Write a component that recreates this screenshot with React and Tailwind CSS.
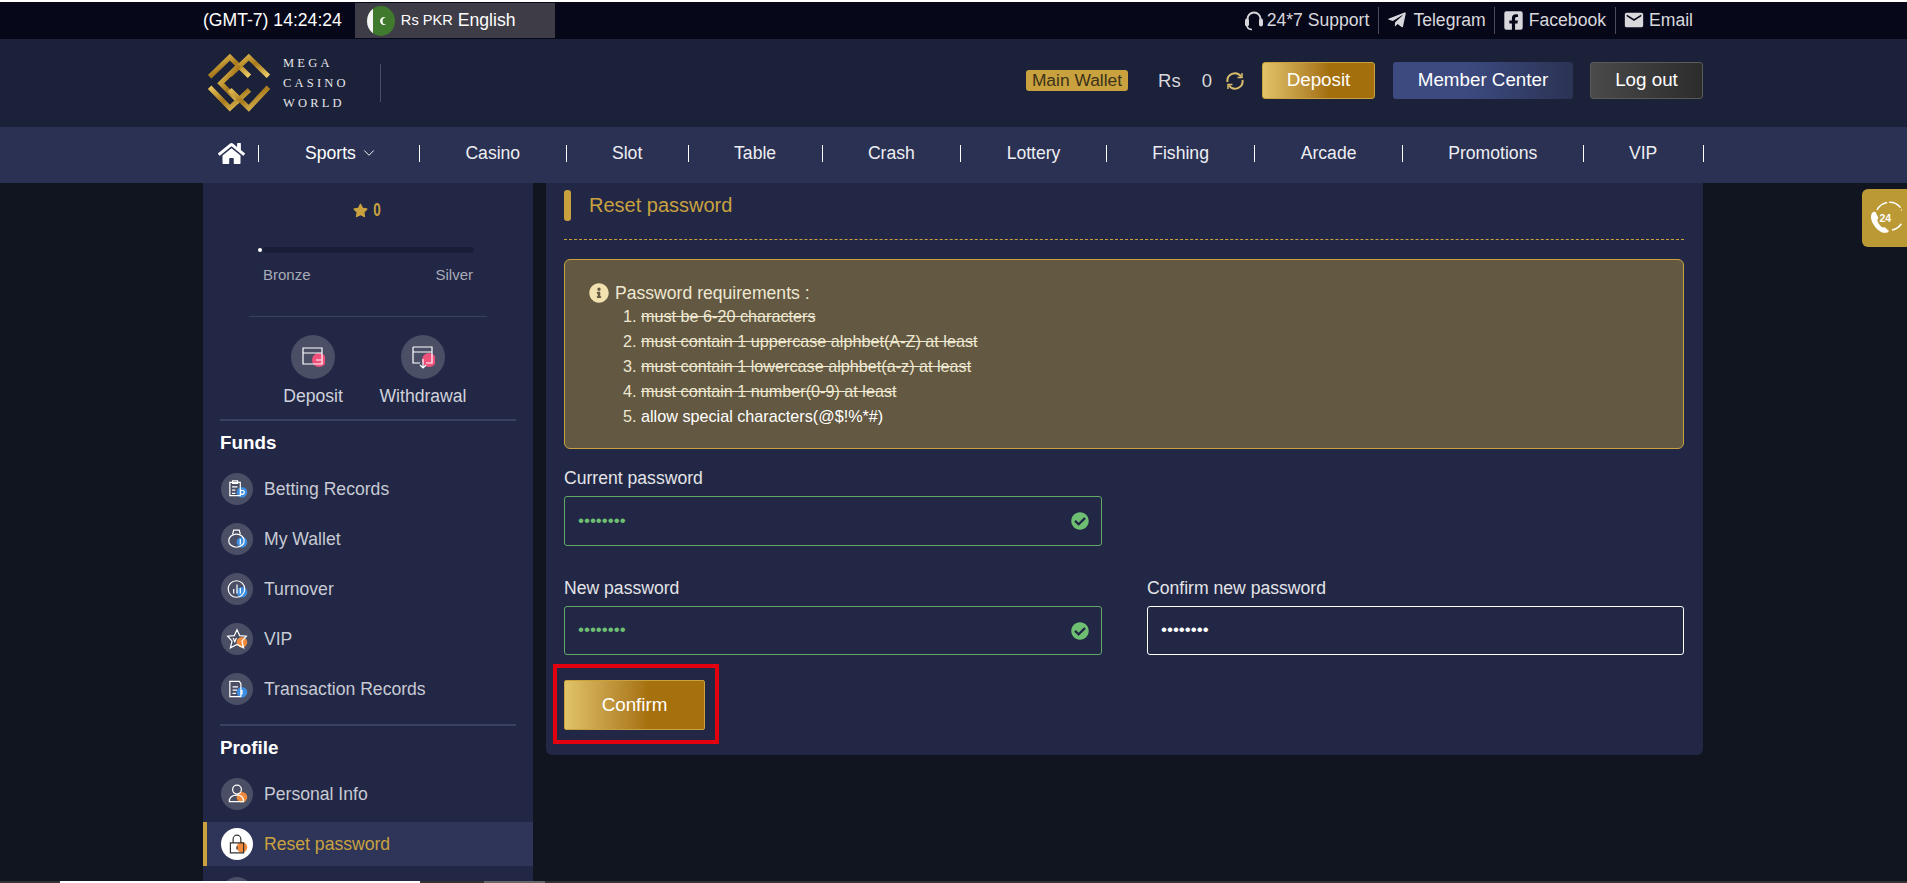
import React from 'react';
import { FaHome, FaTelegramPlane, FaFacebookSquare, FaStar, FaInfoCircle, FaCheckCircle } from 'react-icons/fa';
import { MdEmail } from 'react-icons/md';
import { ChevronDown } from 'lucide-react';

const navItems = ['Casino', 'Slot', 'Table', 'Crash', 'Lottery', 'Fishing', 'Arcade', 'Promotions', 'VIP'];

const Logo = () => (
    <svg width="64" height="60" viewBox="20 8 196 182" fill="none">
        <defs>
            <linearGradient id="gold" x1="0" y1="0" x2="1" y2="1">
                <stop offset="0" stopColor="#e9c65a" />
                <stop offset="0.5" stopColor="#a87a1c" />
                <stop offset="1" stopColor="#efd06a" />
            </linearGradient>
        </defs>
        <g stroke="url(#gold)" strokeWidth="15">
            <path d="M28 80L90 20L150 78" />
            <path d="M90 75L148 20L208 78" />
            <path d="M118 45L62 100L120 158" />
            <path d="M28 112L90 176L150 120" />
            <path d="M90 120L148 176L208 112" />
        </g>
    </svg>
);

const Flag = () => (
    <svg width="28" height="30" viewBox="0 0 28 30">
        <ellipse cx="14" cy="15" rx="14" ry="15" fill="#3f7a2e" />
        <path d="M6 2.700A14 15 0 0 0 6 27.300Z" fill="#f4f4f4" />
        <path d="M19 11.500A4 4 0 1 0 19 18.500A3.200 3.200 0 1 1 19 11.500Z" fill="#fff" />
    </svg>
);

const Headset = () => (
    <svg width="20" height="21" viewBox="0 0 20 21" fill="none" stroke="#d8d8dc">
        <path d="M3.500 11V9A6.500 6.500 0 0 1 16.500 9V11" strokeWidth="2" />
        <rect x="1" y="8.500" width="4" height="8" rx="2" fill="#d8d8dc" stroke="none" />
        <rect x="15" y="8.500" width="4" height="8" rx="2" fill="#d8d8dc" stroke="none" />
        <path d="M3 16C3.500 18.500 5 19.500 8 19.500" strokeWidth="1.500" />
    </svg>
);

const Refresh = () => (
    <svg width="20" height="20" viewBox="0 0 20 20" fill="none" stroke="#d9bd6c" strokeWidth="2">
        <path d="M2.500 11A7.500 7.500 0 0 1 16 5.500" />
        <path d="M17.500 9A7.500 7.500 0 0 1 4 14.500" />
        <path d="M17 2V6.500H12.500" strokeWidth="1.500" />
        <path d="M3 18V13.500H7.500" strokeWidth="1.500" />
    </svg>
);

const Phone24 = () => (
    <svg width="34" height="34" viewBox="0 0 34 34" fill="none">
        <path d="M9 9A14 14 0 1 1 24 29" stroke="#fff" strokeWidth="1.500" strokeDasharray="13 2" />
        <path d="M4 12C1 17 5 26 13 31C16 32.500 20 32 21 30L16.500 26C15 27 13 26 11 23C9 20 9 18 10.500 17L7.500 11C6 10.500 5 11 4 12Z" fill="#fff" />
        <text x="11.500" y="21" fontSize="10.500" fontWeight="700" fill="#fff" fontFamily="Liberation Sans">24</text>
    </svg>
);

// round grey icon on the left of the sidebar rows
const RowIcon = ({ accent, active, children }) => (
    <span className={`relative flex h-8 w-8 shrink-0 items-center justify-center rounded-full ${active ? 'bg-white' : 'bg-[#4b4f65]'}`}>
        <svg width="22" height="22" viewBox="0 0 20 20" fill="none" stroke={active ? '#333' : '#fff'} strokeWidth="1.100">
            <circle cx="14.500" cy="13" r="4.800" fill={accent} stroke="none" />
            {children}
        </svg>
    </span>
);

const fundsItems = [
    { label: 'Betting Records', accent: '#3b8ee0', icon: <path d="M3.500 4H13V16H3.500ZM6 2.500H10.500V5H6ZM5.500 8H10.500M5.500 11H8.500M5.500 14H8.500M13 13A1.800 1.800 0 1 1 16.600 13A1.800 1.800 0 0 1 13 13Z" /> },
    { label: 'My Wallet', accent: '#3b8ee0', icon: <path d="M2.500 11.500A7 6 0 0 1 16.500 11.500A7 6 0 0 1 2.500 11.500ZM6 5.500L7 2H12L13 5.500M13 10V15" /> },
    { label: 'Turnover', accent: '#3b8ee0', icon: <path d="M17 10A7.500 7.500 0 1 1 2 10A7.500 7.500 0 0 1 17 10ZM7 14V10M10 14V6M13 14V9" /> },
    { label: 'VIP', accent: '#ef8a3c', icon: <path d="M10 1.500L12.500 7L18.500 7.500L14.500 12L16 18L10 15L4 18L5.500 12L1.500 7.500L7.500 7ZM6.500 9L8 12.500L9.500 9" /> },
    { label: 'Transaction Records', accent: '#3b8ee0', icon: <path d="M3.500 3H12L13.500 5V17H3.500ZM6 8H11M6 11H10M6 14H9M14.500 11V15" /> },
];

const FundsRow = ({ label, accent, icon }) => (
    <div className="flex h-[50px] items-center gap-[11px] pl-[18px]">
        <RowIcon accent={accent}>{icon}</RowIcon>
        <span className="text-[17.6px] text-[#c8cad4]">{label}</span>
    </div>
);

const Requirement = ({ n, done, children }) => (
    <li className="flex h-[25px] items-center">
        <span className="w-[18px]">{n}.</span>
        <span className={done ? 'line-through' : 'text-white'}>{children}</span>
    </li>
);

const PasswordField = ({ label, valid, className, boxHeight = 'h-[50px]' }) => (
    <div className={className}>
        <div className="mb-[6px] h-[24px] text-[17.6px] leading-[24px] text-[#e4e4e8]">{label}</div>
        <div className={`flex items-center rounded-[3px] border px-[13px] ${boxHeight} ${valid ? 'border-[#62a868]' : 'border-white'}`}>
            <span className={`mb-[2px] text-[17px] leading-none ${valid ? 'text-[#6fbf73]' : 'text-white'}`}>••••••••</span>
            {valid && <FaCheckCircle className="ml-auto -mr-[1px] text-[18px] text-[#6fbf73]" />}
        </div>
    </div>
);

export default function App() {
    return (
        <div className="relative h-[883px] overflow-hidden border-t-2 border-white bg-[#101520] font-['Liberation_Sans',sans-serif] text-white">
            <div className="h-[37px] bg-[#07071a]">
                <div className="ml-[203px] flex h-full w-[1500px] items-center text-[17.6px]">
                    <span className="mr-[13px]">(GMT-7) 14:24:24</span>
                    <div className="flex h-[35px] w-[200px] items-center gap-[6px] bg-[#3e3c46] pl-[12px]">
                        <Flag />
                        <span className="text-[14.600px]">Rs PKR</span>
                        <span className="-ml-[1px]">English</span>
                    </div>
                    <div className="ml-auto mr-[10px] flex items-center text-[#d8d8dc]">
                        <Headset />
                        <span className="ml-[3px] border-r border-[#4a4a58] pr-[9px]">24*7 Support</span>
                        <FaTelegramPlane className="ml-[8px] text-[20px]" />
                        <span className="ml-[6px] border-r border-[#4a4a58] pr-[8px]">Telegram</span>
                        <FaFacebookSquare className="ml-[8px] text-[21px]" />
                        <span className="ml-[5px] border-r border-[#4a4a58] pr-[9px]">Facebook</span>
                        <MdEmail className="ml-[7px] text-[22px]" />
                        <span className="ml-[4px]">Email</span>
                    </div>
                </div>
            </div>

            <div className="h-[88px] bg-[#1b2139]">
                <div className="ml-[203px] flex h-full w-[1500px] items-center">
                    <div className="ml-[4px] flex items-center">
                        <Logo />
                        <div className="ml-[12px] w-[72px] font-['Liberation_Serif',serif] text-[12.500px] leading-[20px] tracking-[3.200px] text-[#e6e6ea]">
                            <div>MEGA</div>
                            <div>CASINO</div>
                            <div>WORLD</div>
                        </div>
                        <div className="ml-[25px] h-[38px] w-[1px] bg-[#474d68]" />
                    </div>
                    <div className="ml-auto mb-[5px] flex items-center">
                        <span className="rounded-[3px] bg-[#c9a23f] px-[6px] text-[17.400px] leading-[21px] text-[#3b3218]">Main Wallet</span>
                        <span className="ml-[30px] text-[18.500px] text-[#d8d8dc]">Rs</span>
                        <span className="ml-[21px] text-[18.500px] text-[#d8d8dc]">0</span>
                        <span className="ml-[13px]"><Refresh /></span>
                        <button className="ml-[17px] h-[37px] w-[113px] rounded-[3px] border border-[#c9a23f] bg-gradient-to-r from-[#e2c468] via-[#a36f0c] via-60% to-[#a36f0c] text-[18.800px] text-white">Deposit</button>
                        <button className="ml-[18px] h-[37px] w-[180px] rounded-[3px] bg-gradient-to-r from-[#3c4a80] via-[#3c4a80] via-40% to-[#2b3354] text-[18.800px] text-white">Member Center</button>
                        <button className="ml-[17px] h-[37px] w-[113px] rounded-[3px] border border-[#5a5a5a] bg-gradient-to-r from-[#4a4a4a] to-[#2c2c2c] text-[18.800px] text-white">Log out</button>
                    </div>
                </div>
            </div>

            <div className="h-[56px] bg-[#2a3152]">
                <div className="ml-[203px] flex h-full w-[1500px] items-center pb-[4px] text-[17.6px]">
                    <div className="flex h-[17px] w-[56px] shrink-0 items-center border-r border-white pl-[15px]">
                        <FaHome className="shrink-0 text-[27px]" />
                    </div>
                    <div className="flex h-[17px] w-[161px] shrink-0 items-center justify-center gap-[4px] border-r border-white pl-[5px] leading-[17px]">
                        Sports <ChevronDown size={18} strokeWidth={1.25} />
                    </div>
                    {navItems.map(item => (
                        <div key={item} className="h-[17px] shrink-0 border-r border-white px-[45.400px] leading-[17px] text-[#eeeef2]">{item}</div>
                    ))}
                </div>
            </div>

            <div className="ml-[203px] flex w-[1500px] items-start gap-[13px]">
                <aside className="h-[700px] w-[330px] shrink-0 overflow-hidden bg-[#212745]">
                    <div className="flex h-[61px] items-center justify-center gap-[4px] pb-[7px] text-[#c9a23f]">
                        <FaStar className="text-[15px]" />
                        <span className="inline-block scale-x-75 text-[18px] font-bold">0</span>
                    </div>
                    <div className="mx-[55px] flex h-[12px] items-center">
                        <span className="h-[4px] w-[4px] rounded-full bg-white" />
                        <span className="ml-[1px] h-[6px] flex-1 rounded-full bg-[#181d38]" />
                        <span className="w-[4px]" />
                    </div>
                    <div className="mx-[60px] mt-[8px] flex justify-between text-[15px] text-[#a9abb8]">
                        <span>Bronze</span>
                        <span>Silver</span>
                    </div>
                    <div className="mx-[46px] mt-[29px] h-[1px] bg-[#3a4062]" />
                    <div className="mx-[17px] mt-[18px] flex justify-center gap-[22px] border-b-2 border-[#3a4062] pb-[10px] text-[17.6px] text-[#d0d2dc]">
                        <div className="flex w-[88px] flex-col items-center gap-[4px]">
                            <span className="relative flex h-[44px] w-[44px] items-center justify-center rounded-full bg-[#4b4f65]">
                                <svg width="24" height="24" viewBox="0 0 24 24" fill="none" stroke="#fff" strokeWidth="1.200">
                                    <circle cx="18" cy="15" r="7" fill="#f0517a" stroke="none" />
                                    <path d="M2 3H21V19H2ZM2 8H21M15 15H20" />
                                </svg>
                            </span>
                            Deposit
                        </div>
                        <div className="flex w-[88px] flex-col items-center gap-[4px]">
                            <span className="relative flex h-[44px] w-[44px] items-center justify-center rounded-full bg-[#4b4f65]">
                                <svg width="24" height="24" viewBox="0 0 24 24" fill="none" stroke="#fff" strokeWidth="1.200">
                                    <circle cx="18" cy="15" r="7" fill="#f0517a" stroke="none" />
                                    <path d="M2 2H21V18H15M9 18H2V2M2 7H21M12 14V23M9 20L12 23L15 20" />
                                </svg>
                            </span>
                            Withdrawal
                        </div>
                    </div>
                    <div className="px-[17px]">
                        <div className="mb-[10px] mt-[11px] text-[18.800px] font-bold leading-[22px]">Funds</div>
                        <div className="ml-[-17px]">
                            {fundsItems.map(i => <FundsRow key={i.label} {...i} />)}
                        </div>
                        <div className="mt-[10px] h-[2px] bg-[#3a4062]" />
                        <div className="mb-[10px] mt-[11px] text-[18.800px] font-bold leading-[22px]">Profile</div>
                        <div className="ml-[-17px] mr-[-17px]">
                            <FundsRow label="Personal Info" accent="#ef8a3c" icon={<path d="M10 2A4 4 0 1 1 10 10A4 4 0 0 1 10 2ZM3 17C3 12 7 11 10 11C13 11 16 12 16 17Z" />} />
                            <div className="mt-[3px] flex h-[44px] items-center gap-[11px] border-l-4 border-[#c9a23f] bg-[#2e3558] pl-[14px]">
                                <RowIcon accent="#ef8a3c" active>
                                    <path d="M4 9H16V18H4ZM6.500 9V5.500A3.500 3.500 0 0 1 13.500 5.500V9M10 12V15" />
                                </RowIcon>
                                <span className="text-[17.6px] text-[#c9a23f]">Reset password</span>
                            </div>
                            <div className="ml-[18px] mt-[11px] h-8 w-8 rounded-full bg-[#4b4f65]" />
                        </div>
                    </div>
                </aside>

                <main className="w-[1157px] rounded-b-[6px] bg-[#212745] pb-[11px] pl-[18px] pr-[19px]">
                    <div className="flex h-[57px] items-center gap-[18px] border-b border-dashed border-[#c9a23f] pb-[12px]">
                        <span className="h-[31px] w-[7px] rounded-[3px] bg-[#c9a23f]" />
                        <span className="text-[20px] text-[#c9a23f]">Reset password</span>
                    </div>
                    <div className="mt-[19px] h-[190px] rounded-[6px] border border-[#c9a23f] bg-[#635841] px-[25px] pt-[21px] text-[#eee8d2]">
                        <div className="flex h-[24px] items-center gap-[6px] text-[17.6px]">
                            <FaInfoCircle className="-ml-[1px] text-[20px] text-[#f2e2b0]" />
                            Password requirements :
                        </div>
                        <ol className="-mt-[1px] ml-[33px] text-[16.200px]">
                            <Requirement n={1} done>must be 6-20 characters</Requirement>
                            <Requirement n={2} done>must contain 1 uppercase alphbet(A-Z) at least</Requirement>
                            <Requirement n={3} done>must contain 1 lowercase alphbet(a-z) at least</Requirement>
                            <Requirement n={4} done>must contain 1 number(0-9) at least</Requirement>
                            <Requirement n={5}>allow special characters(@$!%*#)</Requirement>
                        </ol>
                    </div>
                    <PasswordField label="Current password" valid className="mt-[17px] w-[538px]" />
                    <div className="mt-[30px] flex gap-[45px]">
                        <PasswordField label="New password" valid boxHeight="h-[49px]" className="w-[538px]" />
                        <PasswordField label="Confirm new password" boxHeight="h-[49px]" className="w-[537px]" />
                    </div>
                    <div className="-ml-[11px] mt-[9px] w-[166px] border-4 border-[#e3000f] px-[7px] pb-[10px] pt-[12px]">
                        <button className="h-[50px] w-[141px] rounded-[2px] border border-[#c9a23f] bg-gradient-to-r from-[#e0c368] via-[#a6710c] via-60% to-[#a6710c] text-[18.800px] text-white">Confirm</button>
                    </div>
                </main>
            </div>

            {/* floating support tab */}
            <div className="absolute right-0 top-[187px] flex h-[58px] w-[45px] items-center justify-center rounded-l-[6px] bg-[#bb9a36]">
                <Phone24 />
            </div>

            {/* browser scrollbar along the bottom edge */}
            <div className="absolute bottom-0 left-0 h-[2px] w-full bg-[#333]">
                <div className="absolute left-[60px] h-full w-[360px] bg-white" />
                <div className="absolute left-[484px] h-full w-[61px] bg-[#666]" />
            </div>
        </div>
    );
}
